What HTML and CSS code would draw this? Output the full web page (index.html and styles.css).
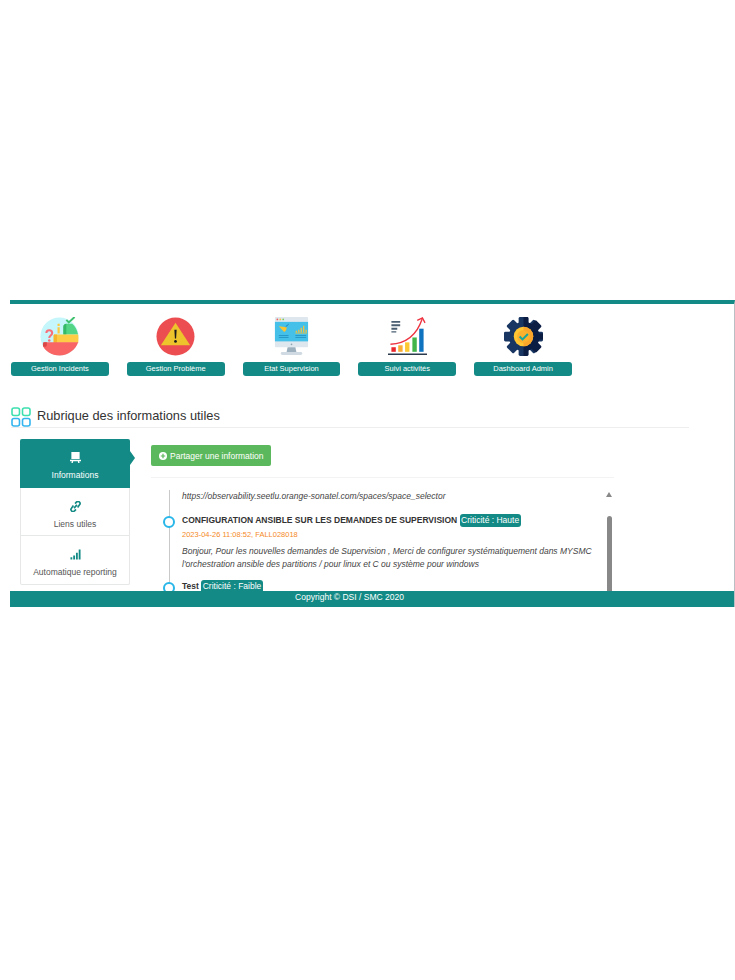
FILE: index.html
```html
<!DOCTYPE html>
<html lang="fr">
<head>
<meta charset="utf-8">
<title>Rubrique des informations utiles</title>
<link rel="stylesheet" href="styles.css">
</head>
<body>
<div class="app">
  <main class="main">
    <nav class="shortcuts">
      <a class="shortcut">
        <svg class="shortcut-icon" viewBox="0 0 40 40"><circle cx="20" cy="20" r="19.500" fill="#c4f6fb"/><path d="M24 10c0-1.500 1-3 3-3h6c3 2.500 5 6 6 11H24z" fill="#52d584"/><path d="M24 10c0-1.500 1-3 3-3v11h-3z" fill="#35b868"/><path d="M27 3l2.500 2.500L35.500 0" fill="none" stroke="#3fc06f" stroke-width="2"/><path d="M18 7h2.200v2.200H18zM18 10.500h2.200V17H18z" fill="#fdc93f"/><path d="M15 18h24.200c.3 2.500.3 5.500 0 8.500H14v-7.500c0-.5.500-1 1-1z" fill="#ffcd45"/><path d="M15 18h2.500v8.500H14v-7.500c0-.5.500-1 1-1z" fill="#f5b52d"/><path d="M4 26h35.200C36.500 33.500 29 39.500 20 39.500 11.500 39.500 5 34.500 3.200 30c-.4-1.500-.2-4 .8-4z" fill="#f96464"/><path d="M4 26h3v2.500c0 1.500-1.500 3-3.800 1.500-.4-1.500-.2-4 .8-4z" fill="#d94848"/><path d="M6.500 16.500c0-4 6-4 6 0 0 2.500-3 2.500-3 5" fill="none" stroke="#f7707a" stroke-width="2.100"/><circle cx="9.500" cy="24" r="1.300" fill="#f7707a"/></svg>
        <span class="shortcut-label">Gestion Incidents</span>
      </a>
      <a class="shortcut">
        <svg class="shortcut-icon" viewBox="0 0 40 40"><circle cx="20" cy="20" r="19.500" fill="#ec4d50"/><path d="M20 6 35 29H5z" fill="#edc42c"/><path d="M18.800 13h2.400l-.6 9h-1.200z" fill="#1b1b1b"/><circle cx="20" cy="25" r="1.400" fill="#1b1b1b"/></svg>
        <span class="shortcut-label">Gestion Problème</span>
      </a>
      <a class="shortcut">
        <svg class="shortcut-icon" viewBox="0 0 40 40"><rect x="3" y="0" width="34" height="31" rx="1" fill="#dfe7ee"/><rect x="3" y="5" width="34" height="20" fill="#45c0e8"/><circle cx="5.500" cy="2.500" r=".9" fill="#f0605a"/><circle cx="8.500" cy="2.500" r=".9" fill="#f5c33b"/><circle cx="11.500" cy="2.500" r=".9" fill="#7ccb5b"/><path d="M7 9.500l8 1c0 2.500-1 4-2.500 5z" fill="#fbc531"/><path d="M14 10l3-2.500" stroke="#1e6fa8" stroke-width=".8"/><path d="M25 16v-2M27.500 16v-3M30 16v-5M32.500 16v-7M35 16v-3" stroke="#f5c33b" stroke-width="1.300"/><path d="M24 16.500h12" stroke="#f5c33b" stroke-width=".8"/><path d="M7 19h10M24 19h11M7 21h10M24 21h11" stroke="#1e8cc0" stroke-width=".8"/><path d="M16 31h8l1 5H15z" fill="#9db0be"/><rect x="9" y="36" width="22" height="3" rx="1.500" fill="#cfdae3"/><circle cx="20" cy="28" r=".9" fill="#8ea4b4"/></svg>
        <span class="shortcut-label">Etat Supervision</span>
      </a>
      <a class="shortcut">
        <svg class="shortcut-icon" viewBox="0 0 40 40"><path d="M3.500 4h9v2h-9zM3.500 7.500h9v2h-9zM3.500 11h6v2h-6zM3.500 14.500h5v1.500h-5z" fill="#4a5f72"/><rect x="3.500" y="31" width="4.500" height="4.700" fill="#e8262c"/><rect x="10.500" y="29" width="4.500" height="6.700" fill="#fbae35"/><rect x="17.500" y="26" width="4.500" height="9.700" fill="#fcc934"/><rect x="25" y="21" width="4.500" height="14.700" fill="#41b54a"/><rect x="32" y="12" width="4.500" height="23.700" fill="#0f73c0"/><path d="M0 38.200h40" stroke="#2a3a4c" stroke-width="1.400"/><path d="M2.500 28C20 27 30 17 35 2" fill="none" stroke="#ee3340" stroke-width="1.400"/><path d="M30 3.500l5.300-2.500 2.700 5" fill="none" stroke="#ee3340" stroke-width="1.400"/></svg>
        <span class="shortcut-label">Suivi activités</span>
      </a>
      <a class="shortcut">
        <svg class="shortcut-icon" viewBox="0 0 40 40">
          <g fill="#183661">
            <circle cx="20" cy="20" r="15"/>
            <rect x="15" y="0" width="10" height="40" rx="1.500"/>
            <rect x="15" y="0" width="10" height="40" rx="1.500" transform="rotate(45 20 20)"/>
            <rect x="15" y="0" width="10" height="40" rx="1.500" transform="rotate(90 20 20)"/>
            <rect x="15" y="0" width="10" height="40" rx="1.500" transform="rotate(135 20 20)"/>
          </g>
          <path d="M20 0h3.500c1 0 1.500.5 1.500 1.500v4.100l3.500 1.500 3-3c.6-.6 1.500-.6 2.100 0l4.300 4.300c.6.6.6 1.500 0 2.100l-3 3 1.500 3.500h4.100c1 0 1.500.5 1.500 1.500v3c0 1-.5 1.500-1.500 1.500h-4.100l-1.500 3.500 3 3c.6.6.6 1.500 0 2.100l-4.300 4.300c-.6.6-1.500.6-2.100 0l-3-3-3.500 1.500v4.100c0 1-.5 1.500-1.500 1.500H20z" fill="#0c1d44"/>
          <circle cx="20" cy="20" r="10" fill="#ffc533"/>
          <path d="M20 10a10 10 0 0 1 0 20z" fill="#fba62a"/>
          <circle cx="20" cy="20" r="6.500" fill="#fbb02e"/>
          <path d="M16 20l3 3 5.500-5.500" fill="none" stroke="#17a59c" stroke-width="2"/>
        </svg>
        <span class="shortcut-label">Dashboard Admin</span>
      </a>
    </nav>

    <h1 class="section-title">
      <svg class="section-icon" viewBox="0 0 20 20"><rect x="1" y="1" width="7.500" height="7.500" rx="2" fill="none" stroke="#3ee0b0" stroke-width="1.600"/><rect x="11.500" y="1" width="7.500" height="7.500" rx="2" fill="none" stroke="#3ee0b0" stroke-width="1.600"/><rect x="1" y="11.500" width="7.500" height="7.500" rx="2" fill="none" stroke="#34b5f0" stroke-width="1.600"/><rect x="11.500" y="11.500" width="7.500" height="7.500" rx="2" fill="none" stroke="#34b5f0" stroke-width="1.600"/></svg>
      <span class="section-text">Rubrique des informations utiles</span>
    </h1>

    <section class="workspace">
      <ul class="tabs">
        <li class="tab tab-active">
          <svg class="tab-icon" viewBox="0 0 12 12"><path d="M1.500 0h9v7.500h-9zM0 8.500h12V10H0zM2 10h1.500L3 12H1.500zM8.500 10H10l.5 2H9z" fill="#fff"/></svg>
          <span>Informations</span>
        </li>
        <li class="tab">
          <svg class="tab-icon" viewBox="0 0 12 12"><path d="M5.500 2.800 7 1.300a2.100 2.100 0 0 1 3.400 2.800L8.300 7M6.500 9.200 5 10.700a2.100 2.100 0 0 1-3.400-2.800L3.700 5M4.400 7.800l3.200-3.600" fill="none" stroke="#138a85" stroke-width="1.800"/></svg>
          <span>Liens utiles</span>
        </li>
        <li class="tab">
          <svg class="tab-icon" viewBox="0 0 12 12"><path d="M.5 9h2v2.500h-2zM3.500 7h2v4.500h-2zM6.500 4h2v7.500h-2zM9.500 .5h2v11h-2z" fill="#138a85"/></svg>
          <span>Automatique reporting</span>
        </li>
      </ul>

      <div class="feed">
        <button class="share-btn" type="button">
          <svg class="share-icon" viewBox="0 0 10 10"><circle cx="5" cy="5" r="5" fill="#fff"/><path d="M5 2.200v5.600M2.200 5h5.600" stroke="#5cb85c" stroke-width="1.500"/></svg>
          Partager une information
        </button>
        <div class="feed-panel">
          <div class="timeline">
            <p class="entry-text entry-first">https://observability.seetlu.orange-sonatel.com/spaces/space_selector</p>
            <article class="entry">
              <span class="dot"></span>
              <h2 class="entry-title">CONFIGURATION ANSIBLE SUR LES DEMANDES DE SUPERVISION <span class="badge">Criticité : Haute</span></h2>
              <div class="entry-meta">2023-04-26 11:08:52, FALL028018</div>
              <p class="entry-text">Bonjour, Pour les nouvelles demandes de Supervision , Merci de configurer systématiquement dans MYSMC l'orchestration ansible des partitions / pour linux et C ou système pour windows</p>
            </article>
            <article class="entry">
              <span class="dot"></span>
              <h2 class="entry-title">Test <span class="badge">Criticité : Faible</span></h2>
            </article>
          </div>
          <div class="scrollbar">
            <span class="scroll-arrow"></span>
            <span class="scroll-thumb"></span>
          </div>
        </div>
      </div>
    </section>
  </main>
  <footer class="footer">Copyright © DSI / SMC 2020</footer>
</div>
</body>
</html>
```
FILE: styles.css
```css
* { box-sizing: border-box; }
html, body { margin: 0; padding: 0; background: #fff; }
body { padding: 300px 0 0 10px; font-family: "Liberation Sans", Arial, sans-serif; color: #333; }
.app { width: 725px; height: 307px; display: flex; flex-direction: column; border-top: 4px solid #138a85; border-right: 1px solid #b9bfc2; }
.main { height: 287px; overflow: hidden; }

.shortcuts { display: flex; gap: 18px; padding: 13px 0 0 1px; }
.shortcut { width: 97.800px; display: flex; flex-direction: column; align-items: center; gap: 6px; }
.shortcut-icon { width: 39px; height: 39px; display: block; }
.shortcut-label { width: 97.800px; height: 14px; line-height: 14px; background: #138a85; border-radius: 3px; color: #fff; font-size: 7.500px; text-align: center; }

.section-title { display: flex; align-items: center; gap: 6px; width: 678px; height: 21px; margin: 31px 0 0 1px; border-bottom: 1px solid #eeeeee; font-size: 12.800px; font-weight: 400; color: #333; line-height: 16px; }
.section-icon { width: 20px; height: 20px; flex: none; }
.section-text { padding-bottom: 3px; }

.workspace { display: flex; gap: 21px; margin: 11px 0 0 10px; }
.tabs { list-style: none; margin: 0; padding: 0; width: 110px; height: 146px; border: 1px solid #e6e8e8; border-radius: 2px; border-top: 0; flex: none; }
.tab { height: 48.500px; display: flex; flex-direction: column; align-items: center; padding-top: 13px; gap: 7px; font-size: 8.500px; color: #555; border-bottom: 1px solid #e6e8e8; position: relative; }
.tab:last-child { border-bottom: 0; }
.tab-active { background: #138a85; color: #fff; margin: 0 -1px; border-bottom: 0; border-radius: 2px 2px 0 0; }
.tab-active::after { content: ""; position: absolute; left: 100%; top: 12px; border-left: 5px solid #138a85; border-top: 7px solid transparent; border-bottom: 7px solid transparent; }
.tab-icon { width: 11px; height: 11px; display: block; }

.feed { width: 463px; padding-top: 6px; }
.share-btn { display: flex; align-items: center; gap: 2px; width: 120px; height: 21px; padding: 0 0 0 8px; border: 0; border-radius: 2px; background: #5cb85c; color: #fff; font-family: inherit; font-size: 8.500px; }
.share-icon { width: 8px; height: 8px; margin-right: 1px; }
.feed-panel { display: flex; margin-top: 11px; border-top: 1px solid #f3f3f3; padding-top: 12px; height: 130px; }
.timeline { flex: 1; margin-left: 18px; padding-left: 12px; border-left: 1px solid #c9c9c9; }
.entry { position: relative; margin-top: 11px; }
.entry + .entry { margin-top: 9px; }
.dot { position: absolute; left: -19px; top: 2px; width: 12px; height: 12px; border-radius: 50%; border: 2px solid #29b6e8; background: #fff; }
.entry-title { margin: 0; font-size: 8.500px; line-height: 13px; font-weight: 700; color: #333; }
.badge { display: inline-block; padding: 0 1.500px; height: 13px; line-height: 13px; background: #138a85; border-radius: 3px; color: #fff; font-weight: 400; font-size: 8.500px; }
.entry-meta { margin-top: 2px; font-size: 7.500px; line-height: 11px; color: #f58a1f; }
.entry-text { margin: 5px 0 0; font-size: 8.500px; line-height: 13px; font-style: italic; color: #444; }
.entry-first { margin: 0; }
.scrollbar { width: 8px; margin: 0 1px 0 7px; flex: none; display: flex; flex-direction: column; align-items: center; padding-top: 2px; }
.scroll-arrow { border-bottom: 5px solid #888; border-left: 3px solid transparent; border-right: 3px solid transparent; }
.scroll-thumb { width: 5px; flex: 1; margin-top: 19px; background: #888; border-radius: 3px 3px 0 0; }

.footer { height: 16px; background: #138a85; color: #fff; font-size: 8.500px; line-height: 12px; text-align: center; padding-right: 45px; }
```
